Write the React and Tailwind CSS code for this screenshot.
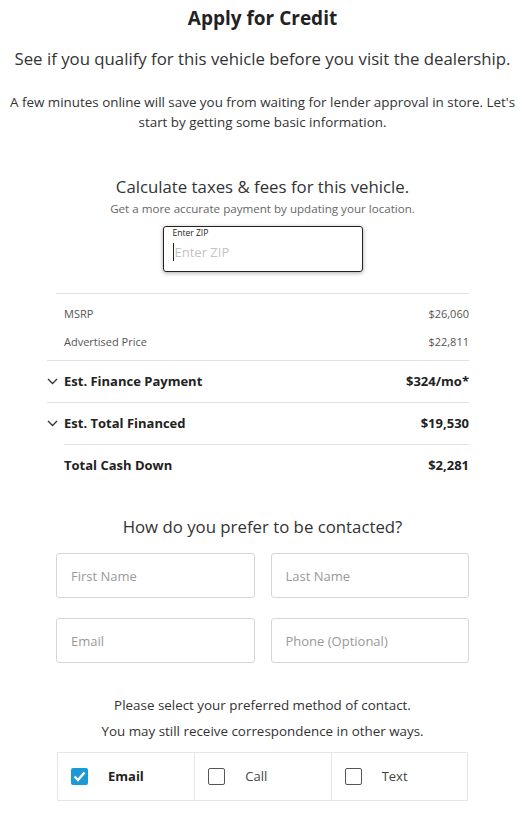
import React, { useState } from "react";

const rowLine = "border-t border-[#e2e2e2]";

const Chevron = () => (
  <svg width="11" height="7" viewBox="0 0 11 7" className="mr-[6px]">
    <path d="M1 1l4.5 4.5L10 1" fill="none" stroke="#333" strokeWidth="1.3" />
  </svg>
);

const CheckBox = ({ checked }) =>
  checked ? (
    <span className="w-[17px] h-[17px] rounded-[2px] bg-[#1b9ad6] flex items-center justify-center">
      <svg width="13" height="11" viewBox="0 0 13 11">
        <path d="M1.5 5.5l3.5 3.5L11.5 1.5" fill="none" stroke="#fff" strokeWidth="2.4" />
      </svg>
    </span>
  ) : (
    <span className="w-[17px] h-[17px] rounded-[2px] border border-[#555] bg-white" />
  );

const App = () => {
  const [zip, setZip] = useState("");
  const [method, setMethod] = useState("Email");

  return (
    <div className="w-[525px] bg-white text-[#222] font-['Open_Sans',sans-serif]">
      <div className="pt-[5px] text-center">
        <h1 className="text-[19px] font-bold leading-[26px]">Apply for Credit</h1>
        <p className="mt-[16px] text-[16.8px] leading-[24px] text-[#333]">
          See if you qualify for this vehicle before you visit the dealership.
        </p>
        <p className="mt-[21px] px-[4px] text-[13.4px] leading-[20px] text-[#333]">
          A few minutes online will save you from waiting for lender approval in store. Let's
          start by getting some basic information.
        </p>
      </div>

      <div className="mt-[44px] text-center">
        <h2 className="text-[16.8px] leading-[22px] text-[#333]">Calculate taxes &amp; fees for this vehicle.</h2>
        <p className="mt-[2px] text-[11.6px] leading-[18px] text-[#666]">
          Get a more accurate payment by updating your location.
        </p>
      </div>

      <div className="mt-[8px] flex justify-center">
        <label className="w-[200px] h-[46px] rounded-[3px] border border-[#222] shadow-[0_1px_4px_rgba(0,0,0,0.35)] px-[9px] block">
          <span className="block text-[8.5px] leading-[12px] text-[#222]">Enter ZIP</span>
          <input
            value={zip}
            onChange={(e) => setZip(e.target.value)}
            placeholder="Enter ZIP"
            className="w-full text-[13px] leading-[18px] outline-0 placeholder-[#c4c4c4] border-l border-[#222] pl-[1px]"
          />
        </label>
      </div>

      <div className="mx-[56px] mt-[21px] text-[11px]">
        <div className={`${rowLine} pt-[10px] pb-[8px]`}>
          <div className="flex justify-between pl-[8px] h-[20px] items-center text-[#555]">
            <span>MSRP</span>
            <span>$26,060</span>
          </div>
          <div className="flex justify-between pl-[8px] h-[20px] mt-[8px] items-center text-[#555]">
            <span>Advertised Price</span>
            <span>$22,811</span>
          </div>
        </div>
        <div className={`${rowLine} h-[42px] flex justify-between items-center font-bold text-[13px] -ml-[9px]`}>
          <span className="flex items-center">
            <Chevron />
            Est. Finance Payment
          </span>
          <span>$324/mo*</span>
        </div>
        <div className={`${rowLine} h-[42px] flex justify-between items-center font-bold text-[13px] -ml-[9px]`}>
          <span className="flex items-center">
            <Chevron />
            Est. Total Financed
          </span>
          <span>$19,530</span>
        </div>
        <div className={`${rowLine} ml-[8px] h-[43px] flex justify-between items-center font-bold text-[13px]`}>
          <span>Total Cash Down</span>
          <span>$2,281</span>
        </div>
      </div>

      <h2 className="mt-[28px] text-center text-[16.8px] leading-[24px] text-[#333]">
        How do you prefer to be contacted?
      </h2>

      <div className="mx-[56px] mt-[14px] grid grid-cols-2 gap-x-[16px] gap-y-[20px]">
        {["First Name", "Last Name", "Email", "Phone (Optional)"].map((p) => (
          <input
            key={p}
            placeholder={p}
            className="h-[45px] rounded-[3px] border border-[#d6d6d6] px-[14px] text-[13px] outline-0 placeholder-[#999]"
          />
        ))}
      </div>

      <div className="mt-[29px] text-center text-[13.4px] leading-[26px] text-[#333]">
        <p>Please select your preferred method of contact.</p>
        <p>You may still receive correspondence in other ways.</p>
      </div>

      <div className="mx-[57px] mt-[8px] grid grid-cols-3 border border-[#e6e6e6]">
        {["Email", "Call", "Text"].map((m, i) => (
          <button
            key={m}
            onClick={() => setMethod(m)}
            className={`h-[47px] flex items-center pl-[13px] text-[13px] ${i > 0 ? "border-l border-[#e6e6e6]" : ""}`}
          >
            <CheckBox checked={method === m} />
            <span className={`ml-[20px] ${method === m ? "font-bold text-[#222]" : "text-[#444]"}`}>{m}</span>
          </button>
        ))}
      </div>
      <div className="h-[13px]" />
    </div>
  );
};

export default App;
